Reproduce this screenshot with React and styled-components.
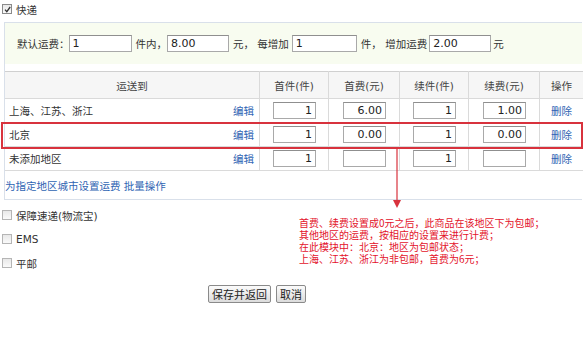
import React from 'react';
import styled, { createGlobalStyle } from 'styled-components';

const Global = createGlobalStyle`
  body {
    margin: 0;
    background: #fff;
    font-family: "DejaVu Sans", "Noto Sans CJK SC", sans-serif;
    font-size: 10.5px;
    color: #333;
  }
`;

const Page = styled.div`
  position: relative;
  width: 584px;
  height: 347px;
`;

const CheckRow = styled.label`
  display: flex;
  align-items: center;
  gap: 4px;
  height: ${p => p.h || 24}px;
  padding-left: 2px;
`;

const Box = styled.span`
  width: 8px;
  height: 8px;
  border: 1px solid ${p => (p.checked ? '#8a8a8a' : '#b5b5b5')};
  background: linear-gradient(#e8e8e8, #fafafa);
  display: flex;
  align-items: center;
  justify-content: center;
`;

const Panel = styled.div`
  margin: 4px 2px 0 4px;
  border: 1px solid #d9e0ea;
  border-right: none;
`;

const Defaults = styled.div`
  display: flex;
  align-items: center;
  height: 41px;
  padding-left: 12px;
  background: #f8fcf0;
  white-space: nowrap;
`;

const Input = styled.input`
  box-sizing: border-box;
  width: ${p => p.w || 62}px;
  height: 17px;
  margin: ${p => p.m || '0 4px 0 3px'};
  padding: 0 3px;
  border: 1px solid #a9a9a9;
  border-top-color: #8f8f8f;
  font-family: "DejaVu Sans", sans-serif;
  font-size: 11px;
  color: #222;
  text-align: ${p => p.align || 'left'};
  background: #fff;
`;

const Table = styled.table`
  width: 578px;
  margin-top: 7px;
  border-collapse: collapse;
  th, td {
    border: 1px solid #dadada;
    padding: 0;
  }
  tr:first-child th { border-top-color: #d0d0d0; }
  th:first-child, td:first-child { border-left: none; }
  th:last-child, td:last-child { border-right: none; }
`;

const Th = styled.th`
  height: 26px;
  font-weight: normal;
  background: #f6f6f6;
  color: #444;
  width: ${p => p.w}px;
`;

const Td = styled.td`
  height: 23px;
  text-align: ${p => p.align || 'right'};
  padding-right: ${p => p.pr || 0}px !important;
`;

const AreaCell = styled.div`
  display: flex;
  justify-content: space-between;
  padding: 0 5px 0 4px;
`;

const Link = styled.a`
  color: #2f64b3;
  text-decoration: none;
  cursor: pointer;
`;

const Batch = styled.div`
  height: 28px;
  display: flex;
  align-items: center;
`;

const Lower = styled.div`
  display: flex;
  margin-top: 3px;
`;

const Options = styled.div`
  width: 299px;
`;

const Note = styled.div`
  margin-top: 14px;
  color: #e3132b;
  font-size: 10px;
  line-height: 12px;
  font-family: "Noto Sans CJK SC", sans-serif;
`;

const Actions = styled.div`
  display: flex;
  gap: 5px;
  padding-left: 208px;
  margin-top: 10px;
`;

const Button = styled.button`
  height: 18px;
  padding: 0 3px;
  border: 1px solid #8a8a8a;
  border-radius: 2px;
  background: linear-gradient(#fbfbfb, #dcdcdc);
  font-family: "Noto Sans CJK SC", sans-serif;
  font-size: 11px;
  color: #222;
  line-height: 16px;
`;

const Highlight = styled.div`
  position: absolute;
  left: 1px;
  top: 122px;
  width: 578px;
  height: 23px;
  border: 2px solid #d8323d;
  pointer-events: none;
`;

const Arrow = styled.svg`
  position: absolute;
  left: 392px;
  top: 147px;
`;

const Check = ({ checked, children, h }) => (
  <CheckRow h={h}>
    <Box checked={checked}>
      {checked && (
        <svg width="7" height="7" viewBox="0 0 7 7">
          <path d="M1 3.6 L2.8 5.6 L6.2 1" stroke="#333" strokeWidth="1.3" fill="none" />
        </svg>
      )}
    </Box>
    <span>{children}</span>
  </CheckRow>
);

const rows = [
  { area: '上海、江苏、浙江', first: '1', fee: '6.00', next: '1', nfee: '1.00' },
  { area: '北京', first: '1', fee: '0.00', next: '1', nfee: '0.00' },
  { area: '未添加地区', first: '1', fee: '', next: '1', nfee: '' },
];

export default function App() {
  return (
    <Page>
      <Global />
      <Check checked h={18}>快递</Check>
      <Panel>
        <Defaults>
          默认运费：<Input w={63} m="0 4px 0 -1px" defaultValue="1" />件内，
          <Input w={62} m="0 4px 0 0" defaultValue="8.00" />元，
          每增加<Input w={65} defaultValue="1" />件，
          增加运费<Input w={62} m="0 2px 0 2px" defaultValue="2.00" />元
        </Defaults>
        <Table>
          <thead>
            <tr>
              <Th w={254}>运送到</Th>
              <Th w={68}>首件(件)</Th>
              <Th w={70}>首费(元)</Th>
              <Th w={68}>续件(件)</Th>
              <Th w={70}>续费(元)</Th>
              <Th>操作</Th>
            </tr>
          </thead>
          <tbody>
            {rows.map(r => (
              <tr key={r.area}>
                <Td align="left">
                  <AreaCell>
                    <span>{r.area}</span>
                    <Link>编辑</Link>
                  </AreaCell>
                </Td>
                <Td pr={12}><Input w={43} m="0" align="right" defaultValue={r.first} /></Td>
                <Td pr={13}><Input w={43} m="0" align="right" defaultValue={r.fee} /></Td>
                <Td pr={12}><Input w={43} m="0" align="right" defaultValue={r.next} /></Td>
                <Td pr={13}><Input w={43} m="0" align="right" defaultValue={r.nfee} /></Td>
                <Td align="center"><Link>删除</Link></Td>
              </tr>
            ))}
          </tbody>
        </Table>
        <Batch>
          <Link>为指定地区城市设置运费</Link>&nbsp;<Link>批量操作</Link>
        </Batch>
      </Panel>
      <Lower>
        <Options>
          <Check>保障速递(物流宝)</Check>
          <Check>EMS</Check>
          <Check>平邮</Check>
        </Options>
        <Note>
          首费、续费设置成0元之后，此商品在该地区下为包邮；<br />
          其他地区的运费，按相应的设置来进行计费；<br />
          在此模块中：北京：地区为包邮状态；<br />
          上海、江苏、浙江为非包邮，首费为6元；
        </Note>
      </Lower>
      <Actions>
        <Button>保存并返回</Button>
        <Button>取消</Button>
      </Actions>
      <Highlight />
      <Arrow width="10" height="62" viewBox="0 0 10 62">
        <line x1="5" y1="0" x2="5" y2="54" stroke="#d8323d" strokeWidth="1.2" />
        <path d="M1 53 L9 53 L5 61 Z" fill="#d8323d" />
      </Arrow>
    </Page>
  );
}
